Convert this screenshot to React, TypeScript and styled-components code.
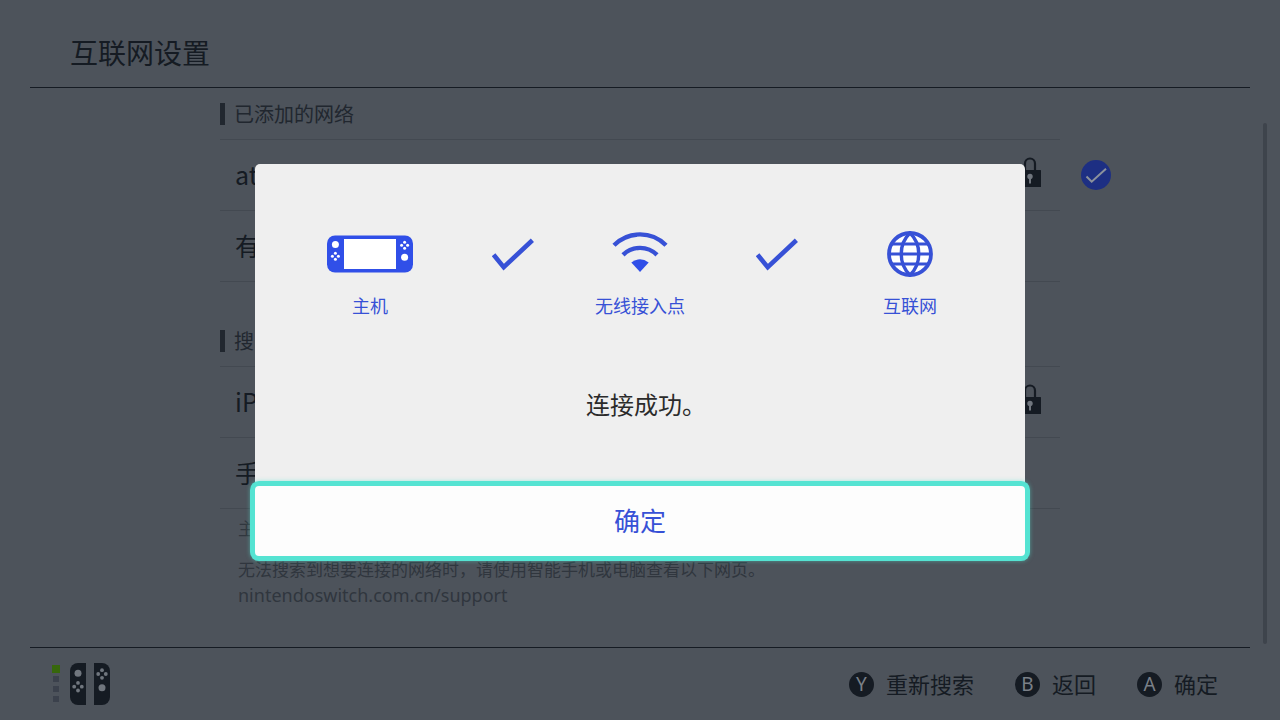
import React from "react";
import styled, { createGlobalStyle } from "styled-components";

const color = {
  page: "#4d535b",
  ink: "#151b23",
  inkSoft: "#21272f",
  help: "#30363e",
  rule: "#434951",
  knob: "#70767e",
  accent: "#3751d6",
  glow: "#55e3d2",
};

const GlobalStyle = createGlobalStyle`
  *, *::before, *::after { box-sizing: border-box; }
  body {
    margin: 0;
    background: ${color.page};
    font-family: "Noto Sans CJK SC", "Noto Sans", sans-serif;
    color: ${color.ink};
  }
  h1, h2, p, ul { margin: 0; padding: 0; font-weight: 400; }
  ul { list-style: none; }
  button { font: inherit; color: inherit; border: 0; background: none; cursor: pointer; }
  svg { display: block; flex: none; }
`;

const Page = styled.div`
  min-height: 100vh;
  display: flex;
  flex-direction: column;
`;

const Header = styled.header`
  margin: 0 30px;
  padding: 16px 40px 0;
  height: 88px;
  display: flex;
  align-items: center;
  border-bottom: 1px solid ${color.ink};
`;

const Title = styled.h1`
  font-size: 28px;
  line-height: 40px;
`;

const Main = styled.main`
  flex: 1;
  display: flex;
  padding: 0 13px 0 17px;
`;

const Content = styled.div`
  flex: 1;
  display: flex;
  justify-content: center;
`;

const Column = styled.div`
  width: 840px;
  padding-top: 15px;
`;

const ScrollThumb = styled.div`
  width: 4px;
  margin: 35px 0 3px;
  border-radius: 2px;
  background: #3e444c;
`;

const Section = styled.section`
  & + & { margin-top: 48px; }
`;

const SectionTitle = styled.h2`
  border-left: 5px solid ${color.inkSoft};
  padding-left: 9px;
  font-size: 20px;
  line-height: 22px;
  color: ${color.inkSoft};
`;

const List = styled.ul`
  margin-top: 14px;
  border-top: 1px solid ${color.rule};
`;

const Row = styled.li`
  display: grid;
  grid-template-columns: 1fr 30px;
  column-gap: 21px;
  margin-right: -51px;
  align-items: center;
`;

const Network = styled.button`
  height: 71px;
  padding: 0 19px 0 15px;
  display: flex;
  align-items: center;
  justify-content: space-between;
  border-bottom: 1px solid ${color.rule};
  font-size: 25px;
  line-height: 36px;
  text-align: left;
`;

const NetworkName = styled.span`
  padding-bottom: 2px;
`;

const Help = styled.div`
  margin-top: 6px;
  padding-left: 18px;
  display: grid;
  row-gap: 15px;
  font-size: 17px;
  line-height: 26px;
  color: ${color.help};
`;

const HelpLink = styled.a`
  display: block;
  font-family: "Noto Sans", sans-serif;
  font-size: 18px;
  color: inherit;
  text-decoration: none;
`;

const Footer = styled.footer`
  margin: 0 30px;
  padding: 0 32px 0 22px;
  height: 73px;
  display: flex;
  align-items: center;
  justify-content: space-between;
  border-top: 1px solid ${color.ink};
`;

const Actions = styled.div`
  display: flex;
  gap: 41px;
`;

const Action = styled.button`
  padding: 0;
  display: flex;
  align-items: center;
  gap: 12px;
  font-size: 22px;
  line-height: 30px;
`;

const ActionLabel = styled.span`
  padding-bottom: 2px;
`;

const Key = styled.span`
  width: 25px;
  height: 25px;
  border-radius: 50%;
  background: ${color.ink};
  color: #7a8088;
  font-family: "Noto Sans", sans-serif;
  font-size: 19px;
  line-height: 25px;
  text-align: center;
`;

const Overlay = styled.div`
  position: fixed;
  inset: 0;
  display: grid;
  place-items: center;
`;

const Dialog = styled.div`
  width: 770px;
  max-width: calc(100% - 40px);
  border-radius: 5px;
  background: #efefef;
`;

const DialogBody = styled.div`
  padding: 67px 74px 64px 54px;
`;

const Steps = styled.div`
  display: grid;
  grid-template-columns: 122px 164fr 90px 184fr 82px;
  justify-items: center;
`;

const Step = styled.div`
  display: grid;
  row-gap: 15px;
  justify-items: center;
  font-size: 18px;
  line-height: 26px;
  color: ${color.accent};
  white-space: nowrap;
`;

const Message = styled.p`
  margin: 68px -20px 0 0;
  text-align: center;
  font-size: 24px;
  line-height: 36px;
  font-feature-settings: "halt";
  color: #2b2b2b;
`;

const Confirm = styled.button`
  display: block;
  width: 100%;
  height: 70px;
  padding: 0 0 2px;
  border-radius: 4px;
  background: #fdfdfd;
  box-shadow: 0 0 0 5px ${color.glow}, 0 0 4px 5px rgba(85, 227, 210, 0.5);
  font-size: 26px;
  line-height: 38px;
  color: ${color.accent};
`;

type PadProps = { x: number; y: number; offset: number; r: number; fill: string };

const ButtonPad = ({ x, y, offset, r, fill }: PadProps) => (
  <g fill={fill}>
    <circle cx={x - offset} cy={y} r={r} />
    <circle cx={x + offset} cy={y} r={r} />
    <circle cx={x} cy={y - offset} r={r} />
    <circle cx={x} cy={y + offset} r={r} />
  </g>
);

const LockIcon = () => (
  <svg width="22" height="36" viewBox="0 0 22 36" aria-hidden="true">
    <path d="M6 14V6.500a5 5 0 0 1 10 0V14" fill="none" stroke={color.ink} strokeWidth="2.200" />
    <rect y="13" width="22" height="17" rx="0.500" fill={color.ink} />
    <circle cx="11" cy="19.500" r="2.700" fill={color.knob} />
    <rect x="10" y="20" width="2" height="6.500" fill={color.knob} />
  </svg>
);

const SelectedIcon = () => (
  <svg width="30" height="32" viewBox="0 0 30 32" role="img" aria-label="已连接">
    <circle cx="15" cy="15" r="15" fill="#1d2f83" />
    <path d="M5.500 16.500 10.700 21.700 25 8.700" fill="none" stroke="#8c929c" strokeWidth="2" />
  </svg>
);

const ConsoleIcon = () => (
  <svg width="86" height="46" viewBox="0 0 86 46" aria-hidden="true">
    <rect y="4.500" width="86" height="37" rx="8" fill="#304fe8" />
    <rect x="17" y="8" width="52" height="30" fill="#fff" />
    <circle cx="8.400" cy="13.500" r="3.500" fill="#fff" />
    <ButtonPad x={8.4} y={25.3} offset={3} r={1.5} fill="#fff" />
    <ButtonPad x={77.6} y={14.3} offset={3} r={1.5} fill="#fff" />
    <circle cx="77.600" cy="26.300" r="3.500" fill="#fff" />
  </svg>
);

const WifiIcon = () => (
  <svg width="56" height="46" viewBox="0 0 56 46" aria-hidden="true">
    <g fill="none" stroke={color.accent} strokeWidth="4.400">
      <path d="M2 14.300A36.500 36.500 0 0 1 54 14.300" />
      <path d="M11 23.900A24 24 0 0 1 45 23.900" />
    </g>
    <path d="M19.300 31.500Q28 25 36.700 31.500L28 40.900Z" fill="#304fe8" />
  </svg>
);

const GlobeIcon = () => (
  <svg width="46" height="46" viewBox="0 0 46 46" aria-hidden="true">
    <g fill="none" stroke={color.accent} strokeWidth="3.400">
      <circle cx="23" cy="23" r="21" fill="#fff" strokeWidth="3.800" />
      <path d="M23 2C11.300 13 11.300 33 23 44C34.700 33 34.700 13 23 2Z" />
      <path d="M5 13H41M2 23H44M5 33H41" strokeWidth="2.800" />
    </g>
  </svg>
);

const CheckIcon = () => (
  <svg width="42" height="46" viewBox="0 0 42 46" aria-hidden="true">
    <path d="M1.600 23.800 11.700 36.200 40.400 9.200" fill="none" stroke={color.accent} strokeWidth="4.600" />
  </svg>
);

const ControllersIcon = () => (
  <svg width="58" height="42" viewBox="0 0 58 42" role="img" aria-label="控制器">
    <rect y="2" width="8" height="8" fill="#37670c" />
    <g fill="#3b414c">
      <rect x="1" y="13" width="6" height="6" />
      <rect x="1" y="23" width="6" height="6" />
      <rect x="1" y="33" width="6" height="6" />
    </g>
    <path d="M34 0V42H26a8 8 0 0 1-8-8V8a8 8 0 0 1 8-8Z" fill={color.ink} />
    <path d="M42 0V42H50a8 8 0 0 0 8-8V8a8 8 0 0 0-8-8Z" fill={color.ink} />
    <circle cx="26" cy="10.300" r="3.500" fill={color.knob} />
    <ButtonPad x={26} y={23.7} offset={3.8} r={1.9} fill={color.knob} />
    <ButtonPad x={50} y={11} offset={3.8} r={1.9} fill={color.knob} />
    <circle cx="50" cy="24.700" r="3.500" fill={color.knob} />
  </svg>
);

type NetworkItem = { name: string; locked?: boolean; selected?: boolean };

const NetworkList = ({ items }: { items: NetworkItem[] }) => (
  <List>
    {items.map((item) => (
      <Row key={item.name}>
        <Network type="button">
          <NetworkName>{item.name}</NetworkName>
          {item.locked && <LockIcon />}
        </Network>
        {item.selected && <SelectedIcon />}
      </Row>
    ))}
  </List>
);

const actions = [
  { key: "Y", label: "重新搜索" },
  { key: "B", label: "返回" },
  { key: "A", label: "确定" },
];

export default function App() {
  return (
    <>
      <GlobalStyle />
      <Page>
        <Header>
          <Title>互联网设置</Title>
        </Header>
        <Main>
          <Content>
            <Column>
              <Section>
                <SectionTitle>已添加的网络</SectionTitle>
                <NetworkList items={[{ name: "at", locked: true, selected: true }, { name: "有" }]} />
              </Section>
              <Section>
                <SectionTitle>搜</SectionTitle>
                <NetworkList items={[{ name: "iP", locked: true }, { name: "手" }]} />
              </Section>
              <Help>
                <p>主</p>
                <p>
                  无法搜索到想要连接的网络时，请使用智能手机或电脑查看以下网页。
                  <HelpLink href="#support">nintendoswitch.com.cn/support</HelpLink>
                </p>
              </Help>
            </Column>
          </Content>
          <ScrollThumb />
        </Main>
        <Footer>
          <ControllersIcon />
          <Actions>
            {actions.map(({ key, label }) => (
              <Action key={key} type="button">
                <Key>{key}</Key>
                <ActionLabel>{label}</ActionLabel>
              </Action>
            ))}
          </Actions>
        </Footer>
      </Page>
      <Overlay>
        <Dialog role="dialog" aria-modal="true" aria-labelledby="result">
          <DialogBody>
            <Steps>
              <Step>
                <ConsoleIcon />
                主机
              </Step>
              <CheckIcon />
              <Step>
                <WifiIcon />
                无线接入点
              </Step>
              <CheckIcon />
              <Step>
                <GlobeIcon />
                互联网
              </Step>
            </Steps>
            <Message id="result">连接成功。</Message>
          </DialogBody>
          <Confirm type="button">确定</Confirm>
        </Dialog>
      </Overlay>
    </>
  );
}
